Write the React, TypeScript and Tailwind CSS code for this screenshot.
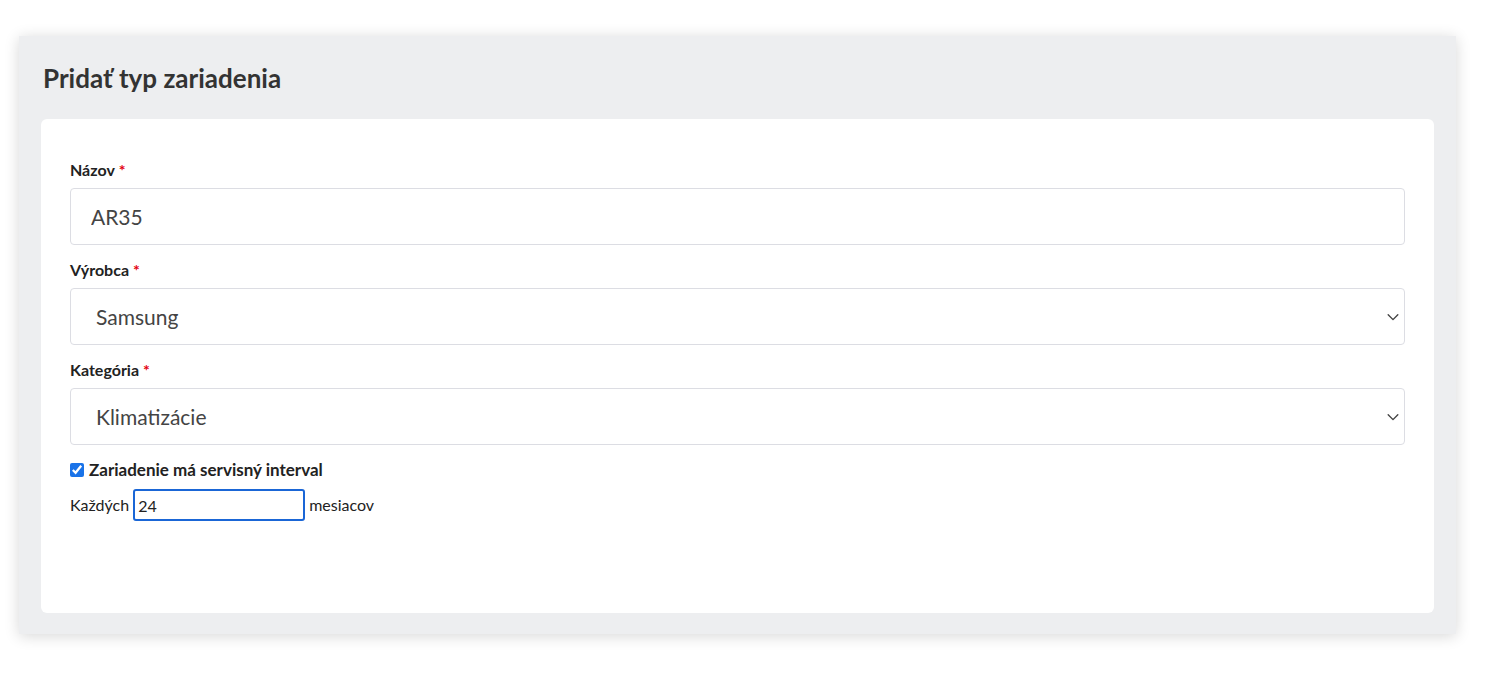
import React, { useState } from 'react';

const Star = () => <span className="text-[#e3000f] ml-[4px]">*</span>;

const Chevron = () => (
  <svg className="w-[14px] h-[14px] text-[#444]" viewBox="0 0 16 16" fill="none">
    <path d="M2.5 5.5l5.5 5.5 5.5-5.5" stroke="currentColor" strokeWidth="1.6" strokeLinecap="round" strokeLinejoin="round" />
  </svg>
);

const App: React.FC = () => {
  const [name, setName] = useState('AR35');
  const [interval, setInterval] = useState('24');
  const [hasInterval, setHasInterval] = useState(true);

  return (
    <div className="min-h-screen bg-white pt-[36px] pl-[19px] font-['Lato','Liberation_Sans',sans-serif]">
      <div className="w-[1437px] h-[598px] bg-[#edeef0] shadow-[0_2px_14px_rgba(0,0,0,0.16)] flex flex-col px-[22px]">
        <h1 className="text-[26px] font-bold text-[#333] pt-[22px] pb-[21px] pl-[2px] leading-[40px]">
          Pridať typ zariadenia
        </h1>
        <div className="bg-white rounded-[6px] h-[494px] px-[29px] pt-[40px]">
          <label className="block text-[16px] font-bold text-[#222] leading-[22px] mb-[7px]">
            Názov<Star />
          </label>
          <input
            value={name}
            onChange={(e) => setName(e.target.value)}
            className="w-full h-[57px] border border-[#dcdde3] rounded-[4px] px-[20px] text-[21px] text-[#444] outline-none"
          />
          <label className="block text-[16px] font-bold text-[#222] leading-[22px] mt-[14px] mb-[7px]">
            Výrobca<Star />
          </label>
          <div className="w-full h-[57px] border border-[#dcdde3] rounded-[4px] pl-[25px] pr-[4px] flex items-center justify-between text-[21px] text-[#444]">
            <span>Samsung</span>
            <Chevron />
          </div>
          <label className="block text-[16px] font-bold text-[#222] leading-[22px] mt-[14px] mb-[7px]">
            Kategória<Star />
          </label>
          <div className="w-full h-[57px] border border-[#dcdde3] rounded-[4px] pl-[25px] pr-[4px] flex items-center justify-between text-[21px] text-[#444]">
            <span>Klimatizácie</span>
            <Chevron />
          </div>
          <label className="flex items-center gap-[5px] mt-[14px] text-[17px] font-bold text-[#222] leading-[22px]">
            <input
              type="checkbox"
              checked={hasInterval}
              onChange={(e) => setHasInterval(e.target.checked)}
              className="w-[14px] h-[14px] accent-[#1a73e8]"
            />
            Zariadenie má servisný interval
          </label>
          <div className="flex items-center mt-[8px] text-[16px] text-[#222]">
            <span>Každých</span>
            <input
              value={interval}
              onChange={(e) => setInterval(e.target.value)}
              className="w-[172px] h-[32px] mx-[4px] border-2 border-[#1a66d6] rounded-[3px] px-[3px] text-[16px] text-[#222] outline-none"
            />
            <span>mesiacov</span>
          </div>
        </div>
      </div>
    </div>
  );
};

export default App;
